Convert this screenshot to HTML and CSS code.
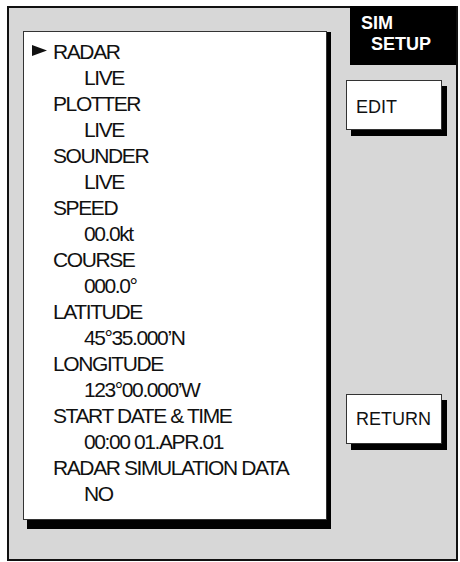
FILE: index.html
```html
<!DOCTYPE html>
<html>
<head>
    <title>SIM SETUP</title>
    <link rel="stylesheet" href="styles.css">
</head>
<body>
    <div class="frame">
        <div class="menu-panel">
            <ul class="menu-list">
                <li class="item selected">
                    <svg class="cursor" width="15" height="11" viewBox="0 0 15 11"><polygon points="0,0 15,5.5 0,11" fill="#111"/></svg>
                    <span class="label">RADAR</span>
                    <span class="value">LIVE</span>
                </li>
                <li class="item">
                    <span class="label">PLOTTER</span>
                    <span class="value">LIVE</span>
                </li>
                <li class="item">
                    <span class="label">SOUNDER</span>
                    <span class="value">LIVE</span>
                </li>
                <li class="item">
                    <span class="label">SPEED</span>
                    <span class="value">00.0kt</span>
                </li>
                <li class="item">
                    <span class="label">COURSE</span>
                    <span class="value">000.0°</span>
                </li>
                <li class="item">
                    <span class="label">LATITUDE</span>
                    <span class="value">45°35.000’N</span>
                </li>
                <li class="item">
                    <span class="label">LONGITUDE</span>
                    <span class="value">123°00.000’W</span>
                </li>
                <li class="item">
                    <span class="label">START DATE &amp; TIME</span>
                    <span class="value">00:00 01.APR.01</span>
                </li>
                <li class="item">
                    <span class="label">RADAR SIMULATION DATA</span>
                    <span class="value">NO</span>
                </li>
            </ul>
        </div>

        <div class="side">
            <div class="title">
                <div>SIM</div>
                <div class="title-second">SETUP</div>
            </div>
            <button class="soft-key edit-key">EDIT</button>
            <button class="soft-key return-key">RETURN</button>
        </div>
    </div>
</body>
</html>
```

FILE: styles.css
```css
body {
    margin: 0;
    background-color: #fff;
    font-family: "Liberation Sans", Arial, sans-serif;
    color: #111;
}
.frame {
    display: flex;
    width: 447px;
    height: 551px;
    margin: 6px 0 0 7px;
    border: 2px solid #111;
    background-color: #d7d7d7;
}
.menu-panel {
    margin: 23px 0 0 14px;
    padding: 7px 0 0 29px;
    box-sizing: border-box;
    width: 304px;
    height: 489px;
    background-color: #fff;
    border: 1px solid #333;
    box-shadow: 4px 1px 0 #000, 4px 9px 0 #000;
}
.menu-list {
    list-style-type: none;
    margin: 0;
    padding: 0;
    font-size: 21px;
    line-height: 26px;
    letter-spacing: -1.4px;
}
.item {
    position: relative;
}
.label, .value {
    display: block;
    white-space: nowrap;
}
.value {
    padding-left: 31px;
}
.cursor {
    position: absolute;
    left: -21px;
    top: 6px;
}
.side {
    display: flex;
    flex-direction: column;
    margin-left: auto;
    width: 110px;
}
.title {
    align-self: flex-end;
    width: 106px;
    height: 59px;
    margin-top: -2px;
    padding: 7px 0 0 11px;
    box-sizing: border-box;
    background-color: #000;
    color: #fff;
    font-weight: bold;
    font-size: 18px;
    line-height: 21px;
}
.title-second {
    padding-left: 10px;
}
.soft-key {
    display: flex;
    align-items: center;
    width: 96px;
    height: 50px;
    padding: 0 0 0 9px;
    background-color: #fff;
    border: 1px solid #333;
    box-shadow: 5px 6px 0 #000;
    font-family: "Liberation Sans", Arial, sans-serif;
    font-size: 18px;
    color: #111;
    text-align: left;
}
.edit-key {
    margin-top: 15px;
    padding-top: 4px;
}
.return-key {
    margin-top: 264px;
}
```
